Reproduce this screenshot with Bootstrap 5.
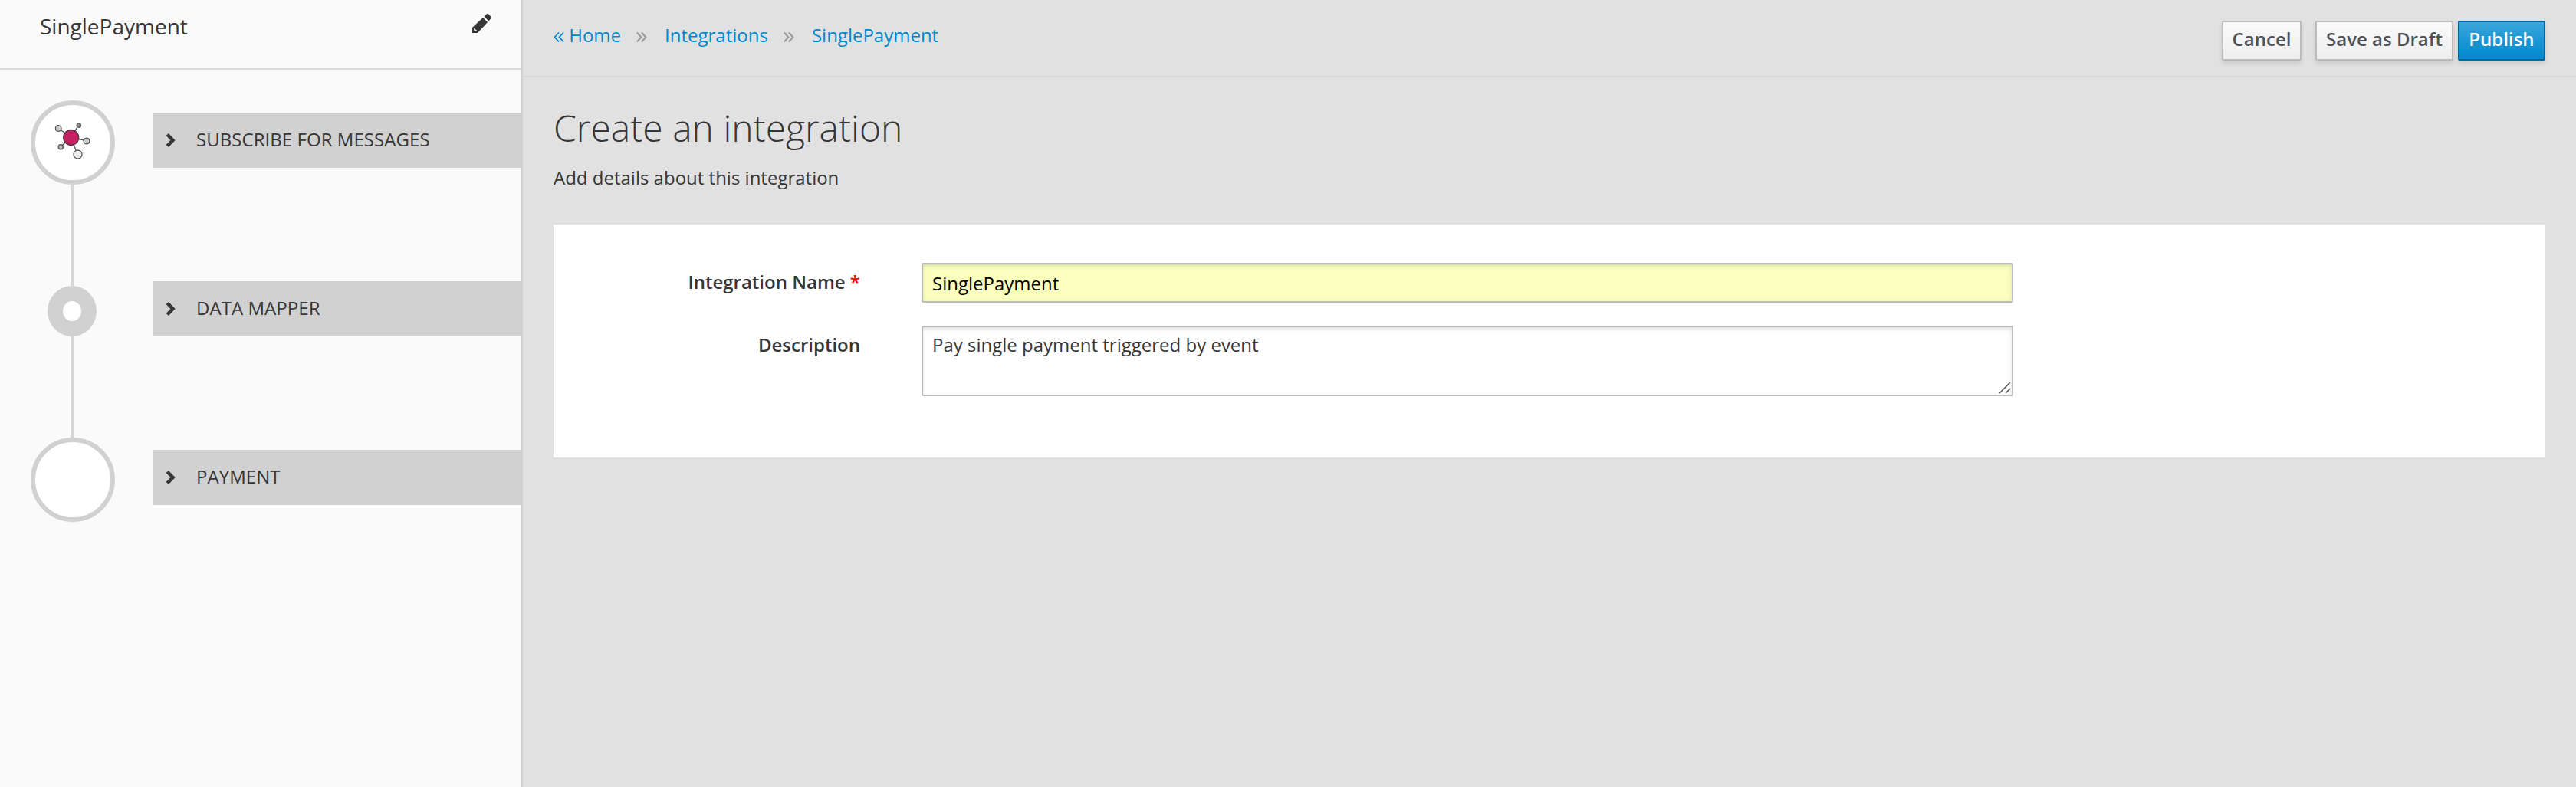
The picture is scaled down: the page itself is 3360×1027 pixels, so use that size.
<!DOCTYPE html>
<html lang="en">
<head>
<meta charset="utf-8">
<title>Create an integration</title>
<link href="https://cdn.jsdelivr.net/npm/bootstrap@5.3.0/dist/css/bootstrap.min.css" rel="stylesheet">
<style>
body{font-family:"Open Sans",sans-serif;font-size:24px;line-height:40px;color:#363636;background:#e1e1e1;height:1027px;overflow:hidden}
.side{width:682px;height:1027px;background:#fafafa;border-right:2px solid #d1d1d1}
.side-head{height:91px;padding:14px 39px 0 52px;border-bottom:2px solid #d9d9d9}
.side-name{font-size:28px;line-height:40px}
.step-rail{width:110px;margin-left:40px;padding-top:40px}
.ring{width:110px;height:110px;border:6px solid #d1d1d1;background:#fff}
.dot{width:64px;height:66px;border:20px solid #d1d1d1;background:#fff;margin-left:-2px}
.wire{width:4px;height:132px;background:#d6d6d6;margin-left:-2px}
.step-list{width:482px;padding-top:56px;gap:148px;margin-right:-2px}
.step-bar{height:72px;background:#d1d1d1;padding-left:16px}
.step-bar span{margin-left:27px;padding-bottom:2px;letter-spacing:.05px}
.topbar{height:101px;border-bottom:2px solid #d9d9d9;padding:27px 40px 0}
.crumbs{line-height:38px}
.crumbs a{color:#0088ce;text-decoration:none}
.crumbs svg{vertical-align:-2px}
.sep{margin:0 23px 0 20px}
.pf-btn{height:52px;font-size:24px;font-weight:600;line-height:44px;padding:0 0 4px;border:2px solid #bbb;border-radius:2px;color:#4d5258;background:linear-gradient(#fafafa,#ededed);box-shadow:0 4px 6px rgba(3,3,3,.1)}
.pf-btn.prime{border-color:#00659c;color:#fff;background:linear-gradient(#39a5dc,#0088ce)}
.w-cancel{width:104px;margin-right:18px}
.w-draft{width:180px;margin-right:6px}
.w-publish{width:114px}
main{padding:39px 40px 0}
h1{font-size:48px;font-weight:300;line-height:54px;margin:0 0 18px}
.intro{height:41px}
.panel{height:304px;background:#fff;padding-top:50px;margin-top:40px}
.first-row{margin-bottom:30px}
.lab{width:400px;font-weight:600;text-align:right;line-height:50px;margin-right:80px}
.req{color:#f00}
.field{width:1424px;border:2px solid #bbb;border-radius:2px;padding:0 12px;font-size:24px;line-height:48px;color:#363636;box-shadow:inset 0 2px 6px rgba(3,3,3,.1),inset 0 2px 2px rgba(3,3,3,.04)}
.field:focus{outline:0}
.fill-auto{background:#faffbd;color:#000;height:52px}
.area{height:92px;resize:none;display:block;line-height:46px}
.grip{right:3px;bottom:3px}
</style>
</head>
<body class="d-flex">
<aside class="side flex-shrink-0">
  <div class="side-head d-flex justify-content-between">
    <div class="side-name">SinglePayment</div>
    <svg width="25" height="26" viewBox="0 0 25 26" class="mt-1" fill="#363636"><path d="M0 18 L14 5 L20 11 L7 25 H0Z"/><path d="M15.500 3.500 L18.500.5 Q20-.6 21.500.6 L24 3.500Q25 5 24 6.500 L21.500 9.500Z"/><path d="M2.500 18.500 L6.500 22.500 L4.500 23 H3 V21.500 H1.800Z" fill="#fff"/></svg>
  </div>
  <div class="d-flex justify-content-between">
    <div class="step-rail d-flex flex-column align-items-center">
      <div class="ring rounded-circle">
        <svg class="d-block" width="98" height="98" viewBox="0 0 98 98" stroke="#555" stroke-width="1.300"><path d="M30.500 30.500 L46.700 42.500 L56.500 26 M46.700 42.500 L66.700 46.500 M33 54.500 L46.700 42.500 L55 64" fill="none"/><circle cx="46.700" cy="42.500" r="10" fill="#c42062" stroke="#4b3540"/><circle cx="30.200" cy="30.500" r="3.800" fill="#ccc"/><circle cx="56.800" cy="26.500" r="2.700" fill="#888"/><circle cx="67" cy="47" r="3.800" fill="#ccc"/><circle cx="33.300" cy="54.800" r="3.200" fill="#aaa"/><circle cx="55.500" cy="64.500" r="5.500" fill="#eee"/></svg>
      </div>
      <div class="wire"></div>
      <div class="dot rounded-circle"></div>
      <div class="wire"></div>
      <div class="ring rounded-circle"></div>
    </div>
    <div class="step-list d-flex flex-column">
      <div class="step-bar d-flex align-items-center"><svg width="13" height="20" viewBox="0 0 13 20"><path d="M2.300 2.500 L9.500 10 L2.300 17.500" fill="none" stroke="#363636" stroke-width="4.600"/></svg><span>SUBSCRIBE FOR MESSAGES</span></div>
      <div class="step-bar d-flex align-items-center"><svg width="13" height="20" viewBox="0 0 13 20"><path d="M2.300 2.500 L9.500 10 L2.300 17.500" fill="none" stroke="#363636" stroke-width="4.600"/></svg><span>DATA MAPPER</span></div>
      <div class="step-bar d-flex align-items-center"><svg width="13" height="20" viewBox="0 0 13 20"><path d="M2.300 2.500 L9.500 10 L2.300 17.500" fill="none" stroke="#363636" stroke-width="4.600"/></svg><span>PAYMENT</span></div>
    </div>
  </div>
</aside>
<div class="flex-grow-1">
  <div class="topbar d-flex justify-content-between">
    <nav class="crumbs d-flex">
      <a href="#"><svg width="14" height="16" viewBox="0 0 14 16" fill="none" stroke="#0088ce" stroke-width="1.800"><path d="M7 1.500 L1.500 7.500 L7 13.500 M13 1.500 L7.500 7.500 L13 13.500"/></svg> Home</a>
      <span class="sep"><svg width="14" height="16" viewBox="0 0 14 16" fill="none" stroke="#9c9c9c" stroke-width="2.300"><path d="M1 1.500 L6.300 7.500 L1 13.500 M7 1.500 L12.300 7.500 L7 13.500"/></svg></span>
      <a href="#">Integrations</a>
      <span class="sep"><svg width="14" height="16" viewBox="0 0 14 16" fill="none" stroke="#9c9c9c" stroke-width="2.300"><path d="M1 1.500 L6.300 7.500 L1 13.500 M7 1.500 L12.300 7.500 L7 13.500"/></svg></span>
      <a href="#">SinglePayment</a>
    </nav>
    <div class="d-flex">
      <button class="btn pf-btn w-cancel">Cancel</button>
      <button class="btn pf-btn w-draft">Save as Draft</button>
      <button class="btn pf-btn prime w-publish">Publish</button>
    </div>
  </div>
  <main>
    <h1>Create an integration</h1>
    <p class="intro mb-0">Add details about this integration</p>
    <form class="panel">
      <div class="d-flex first-row">
        <label class="lab" for="name">Integration Name <span class="req">*</span></label>
        <input id="name" class="field fill-auto" value="SinglePayment">
      </div>
      <div class="d-flex">
        <label class="lab" for="desc">Description</label>
        <div class="position-relative">
          <textarea id="desc" class="field area">Pay single payment triggered by event</textarea>
          <svg class="grip position-absolute" width="16" height="16" viewBox="0 0 16 16" stroke="#555" stroke-width="1.500"><path d="M1 15 L15 1 M9 15 L15 9"/></svg>
        </div>
      </div>
    </form>
  </main>
</div>
<script src="https://cdn.jsdelivr.net/npm/bootstrap@5.3.0/dist/js/bootstrap.bundle.min.js"></script>
</body>
</html>
